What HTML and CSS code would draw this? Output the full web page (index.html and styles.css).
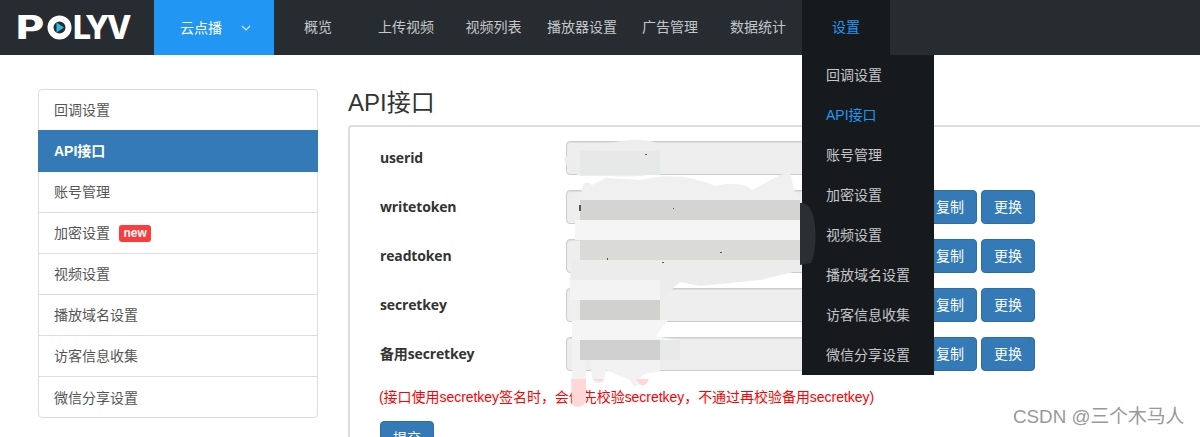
FILE: index.html
```html
<!DOCTYPE html>
<html>
<head>
    <title>API接口</title>
    <link rel="stylesheet" href="styles.css">
</head>

<body>
    <div id="topbar">
        <div class="logo">
            <span class="logo-p">P</span>
            <svg class="logo-o" width="25" height="25" viewBox="0 0 25 25">
                <circle cx="12.5" cy="12.5" r="9" fill="none" stroke="#fff" stroke-width="6"/>
                <path d="M9.5 7.5 L17 12.5 L9.5 17.5 Z" fill="#35b8e6"/>
            </svg>
            <span class="logo-rest">LYV</span>
        </div>
        <div class="product">
            <span>云点播</span>
            <svg width="10" height="6" viewBox="0 0 10 6"><path d="M1 1 L5 5 L9 1" fill="none" stroke="#d5eafc" stroke-width="1.2"/></svg>
        </div>
        <a class="nav-item nav-overview">概览</a>
        <a class="nav-item nav-upload">上传视频</a>
        <a class="nav-item nav-list">视频列表</a>
        <a class="nav-item nav-player">播放器设置</a>
        <a class="nav-item nav-ads">广告管理</a>
        <a class="nav-item nav-stats">数据统计</a>
        <div class="nav-item nav-settings">
            设置
            <div class="dropdown">
                <a>回调设置</a>
                <a class="current">API接口</a>
                <a>账号管理</a>
                <a>加密设置</a>
                <a>视频设置</a>
                <a>播放域名设置</a>
                <a>访客信息收集</a>
                <a>微信分享设置</a>
            </div>
        </div>
    </div>

    <div id="content">
        <div class="side-list">
            <a>回调设置</a>
            <a class="active">API接口</a>
            <a>账号管理</a>
            <a>加密设置<span class="badge-new">new</span></a>
            <a>视频设置</a>
            <a>播放域名设置</a>
            <a>访客信息收集</a>
            <a>微信分享设置</a>
        </div>

        <div class="main">
            <h3>API接口</h3>
            <div class="panel">
                <div class="row">
                    <label>userid</label>
                    <input class="field" type="text" disabled>
                </div>
                <div class="row">
                    <label>writetoken</label>
                    <input class="field" type="text" disabled>
                    <button>复制</button>
                    <button>更换</button>
                </div>
                <div class="row">
                    <label>readtoken</label>
                    <input class="field" type="text" disabled>
                    <button>复制</button>
                    <button>更换</button>
                </div>
                <div class="row">
                    <label>secretkey</label>
                    <input class="field" type="text" disabled>
                    <button>复制</button>
                    <button>更换</button>
                </div>
                <div class="row">
                    <label>备用secretkey</label>
                    <input class="field" type="text" disabled>
                    <button>复制</button>
                    <button>更换</button>
                </div>
                <p class="note">(接口使用secretkey签名时，会优先校验secretkey，不通过再校验备用secretkey)</p>
                <button class="submit">提交</button>
            </div>
        </div>
    </div>

    <!-- smudged-out keys, painted over the form -->
    <svg class="smudge" width="1200" height="437" viewBox="0 0 1200 437">
        <path d="M564 158 Q580 146 630 140 Q658 138 662 150 L662 172 Q640 178 610 176 L580 176 Q566 170 564 158 Z" fill="#ededed"/>
        <rect x="580" y="151" width="80" height="24" fill="#e7e9e9"/>
        <path d="M582 190 Q584 178 592 185 L606 178 L640 180 Q680 170 715 186 Q740 180 752 190 L780 175 L790 172 L794 190 L800 200 L580 200 Z" fill="#f0f0f0"/>
        <rect x="580" y="200" width="220" height="20" fill="#d4d4d3"/>
        <rect x="575" y="220" width="225" height="20" fill="#f5f5f5"/>
        <rect x="580" y="240" width="220" height="20" fill="#dadad9"/>
        <path d="M572 260 L800 260 L802 270 L760 280 L700 286 L680 282 L660 300 L660 280 L570 280 Z" fill="#ececec"/>
        <rect x="570" y="280" width="90" height="20" fill="#f3f3f3"/>
        <rect x="570" y="300" width="10" height="20" fill="#efefef"/>
        <rect x="580" y="300" width="80" height="20" fill="#d1d1d0"/>
        <path d="M572 320 L668 320 L656 336 L676 340 L572 340 Z" fill="#f5f5f5"/>
        <rect x="580" y="340" width="80" height="20" fill="#d0d0d0"/>
        <rect x="660" y="340" width="20" height="20" fill="#e8eaea"/>
        <path d="M572 340 L580 340 L580 360 L660 360 L660 372 Q640 372 640 380 Q636 392 630 380 L606 370 L604 382 Q596 386 592 378 L590 360 L586 360 L586 405 Q578 410 572 405 Z" fill="#f2f2f2"/>
        <path d="M571 379 L586 379 L586 402 Q578 410 572 404 Z" fill="#ffd7d7"/>
        <path d="M593 379 L604 379 Q598 384 593 379 Z M636 379 L649 379 Q643 392 636 379 Z" fill="#ffd7d7"/>
        <path d="M800 203 Q812 202 815 225 Q817 250 811 263 L800 265 Z" fill="#2b2f31"/>
        <path d="M645 154 h2 v1 h-2 Z M673 208 h1 v1 h-1 Z M607 258 h1 v2 h-1 Z M662 262 h2 v1 h-2 Z M720 252 h2 v1 h-2 Z M579 205 h2 v6 h-2 Z" fill="#555"/>
    </svg>

    <span class="watermark">CSDN @三个木马人</span>
</body>
</html>
```

FILE: styles.css
```css
html, body {
    margin: 0;
    height: 437px;
    overflow: hidden;
}

body {
    position: relative;
    background-color: #fff;
    color: #333;
    font-family: "Liberation Sans", "Noto Sans CJK SC", sans-serif;
    font-size: 14px;
    line-height: 20px;
}

#topbar {
    display: flex;
    height: 55px;
    background-color: #272c30;
    color: #c4c7c9;
}

.logo {
    display: flex;
    align-items: center;
    width: 138px;
    padding-left: 16px;
    color: #fff;
    font-family: "Inter", sans-serif;
    font-size: 32px;
    font-weight: 800;
}

.logo-p {
    width: 31px;
    transform: scaleX(1.35);
    transform-origin: left center;
}

.logo-rest {
    margin-left: 1px;
    letter-spacing: -2.5px;
}

.product {
    display: flex;
    align-items: center;
    width: 120px;
    padding-left: 26px;
    box-sizing: border-box;
    background-color: #2196f3;
    color: #fff;
}

.product svg {
    margin-left: 19px;
}

.nav-item {
    line-height: 55px;
    text-align: center;
}

.nav-overview { width: 86px; padding-left: 1px; }
.nav-upload { width: 90px; }
.nav-list { width: 83px; padding-left: 1px; }
.nav-player { width: 94px; }
.nav-ads { width: 82px; }
.nav-stats { width: 88px; padding-left: 3px; }

.nav-settings {
    position: relative;
    width: 88px;
    background-color: #171a1d;
    color: #2196f3;
}

.dropdown {
    position: absolute;
    top: 55px;
    left: 0;
    z-index: 5;
    width: 132px;
    height: 320px;
    background-color: #171a1d;
    color: #c4c7c9;
    text-align: left;
}

.dropdown a {
    display: block;
    height: 40px;
    padding-left: 24px;
    line-height: 40px;
}

.dropdown .current {
    color: #2196f3;
}

#content {
    display: flex;
    padding: 34px 0 0 38px;
}

.side-list {
    width: 280px;
    height: 329px;
    box-sizing: border-box;
    border: 1px solid #ddd;
    border-radius: 4px;
    color: #555;
    flex: none;
}

.side-list a {
    display: flex;
    align-items: center;
    height: 41px;
    box-sizing: border-box;
    padding-left: 15px;
    border-bottom: 1px solid #ddd;
}

.side-list a:last-child {
    border-bottom: none;
}

.side-list .active {
    margin: -1px -1px 0;
    height: 42px;
    padding-left: 16px;
    background-color: #337ab7;
    border-bottom: none;
    color: #fff;
    font-weight: bold;
}

.badge-new {
    margin-left: 9px;
    padding: 0 4.5px;
    height: 17px;
    background-color: #f93d3d;
    border-radius: 3px;
    color: #fff;
    font-size: 12px;
    font-weight: bold;
    line-height: 17px;
}

.main {
    margin-left: 30px;
    flex: 1;
}

h3 {
    margin: 0 0 8px;
    font-size: 24px;
    font-weight: normal;
    line-height: 28px;
}

.panel {
    box-sizing: border-box;
    height: 330px;
    margin-right: -10px;
    padding: 14px 0 0 30px;
    border: 2px solid #ddd;
    border-radius: 4px;
}

.row {
    display: flex;
    align-items: center;
    height: 34px;
    margin-bottom: 15px;
}

.row label {
    width: 186px;
    font-family: "Open Sans", "Noto Sans CJK SC", sans-serif;
    font-weight: bold;
    letter-spacing: -0.15px;
    flex: none;
}

.field {
    box-sizing: border-box;
    width: 355px;
    height: 34px;
    margin-right: 2px;
    background-color: #eee;
    border: 1px solid #ccc;
    border-radius: 4px;
    box-shadow: inset 0 1px 1px rgba(0,0,0,0.075);
}

button {
    box-sizing: border-box;
    width: 54px;
    height: 34px;
    margin-right: 4px;
    padding: 0 0 2px;
    background-color: #337ab7;
    border: 1px solid #2e6da4;
    border-radius: 4px;
    color: #fff;
    font-family: inherit;
    font-size: 14px;
}

.note {
    margin: 0 0 0 -1px;
    padding-top: 1px;
    color: #f00;
    line-height: 20px;
    letter-spacing: -0.04px;
}

.submit {
    margin-top: 14px;
}

.smudge {
    position: absolute;
    top: 0;
    left: 0;
    z-index: 10;
}

.watermark {
    position: absolute;
    top: 405px;
    left: 1013px;
    z-index: 10;
    color: #999;
    font-size: 18.8px;
    line-height: 24px;
}
```
